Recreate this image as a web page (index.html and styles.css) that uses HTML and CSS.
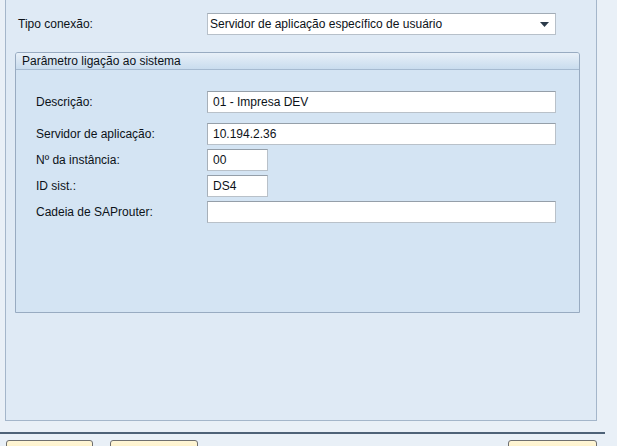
FILE: index.html
```html
<!DOCTYPE html>
<html lang="pt">
<head>
<meta charset="utf-8">
<title>Parâmetro ligação ao sistema</title>
<link rel="stylesheet" href="styles.css">
</head>
<body>
<div class="window">
  <div class="conn-row">
    <span class="label conn-label">Tipo conexão:</span>
    <div class="select">
      <span class="select-text">Servidor de aplicação específico de usuário</span>
      <svg class="arrow" width="9" height="5" viewBox="0 0 9 5"><path d="M0 0h9L4.5 5z" fill="#2b3a4a"/></svg>
    </div>
  </div>
  <div class="group">
    <div class="group-header">Parâmetro ligação ao sistema</div>
    <div class="fields">
      <div class="field first">
        <span class="label field-label">Descrição:</span>
        <div class="input wide">01 - Impresa DEV</div>
      </div>
      <div class="field">
        <span class="label field-label">Servidor de aplicação:</span>
        <div class="input wide">10.194.2.36</div>
      </div>
      <div class="field">
        <span class="label field-label">Nº da instância:</span>
        <div class="input short">00</div>
      </div>
      <div class="field">
        <span class="label field-label">ID sist.:</span>
        <div class="input short">DS4</div>
      </div>
      <div class="field">
        <span class="label field-label">Cadeia de SAProuter:</span>
        <div class="input wide"></div>
      </div>
    </div>
  </div>
</div>
<div class="separator"></div>
<div class="buttons">
  <div class="btn b1"></div>
  <div class="btn b2"></div>
  <div class="btn b3"></div>
</div>
</body>
</html>
```
FILE: styles.css
```css
html, body {
  margin: 0;
  padding: 0;
}
body {
  width: 617px;
  height: 446px;
  overflow: hidden;
  background: #e9f0f7;
  font-family: "Liberation Sans", Arial, sans-serif;
  font-size: 12px;
  color: #0c1218;
}
.window {
  margin-left: 5px;
  width: 590px;
  height: 420px;
  border: 1px solid #a4b6ca;
  border-top: none;
  background: #dfeaf5;
}
.conn-row {
  display: flex;
  align-items: center;
  padding-top: 13px;
  padding-left: 12px;
}
.conn-label {
  width: 189px;
}
.label {
  line-height: 22px;
  white-space: nowrap;
}
.select {
  box-sizing: border-box;
  width: 349px;
  height: 22px;
  background: #fff;
  border: 1px solid #b7c0c9;
  border-top-color: #a2acb6;
  display: flex;
  align-items: center;
  padding-left: 2px;
  padding-right: 6px;
}
.select-text {
  flex: 1;
  white-space: nowrap;
}
.arrow {
  display: block;
}
.group {
  box-sizing: border-box;
  margin-top: 17px;
  margin-left: 9px;
  width: 565px;
  height: 261px;
  border: 1px solid #98abc1;
  border-radius: 3px 3px 0 0;
  background: #d4e4f3;
}
.group-header {
  height: 16px;
  line-height: 16px;
  padding-left: 6px;
  border-bottom: 1px solid #a6bad0;
  background: linear-gradient(#e8f0f8, #c9dcee);
  border-radius: 2px 2px 0 0;
  white-space: nowrap;
}
.fields {
  display: flex;
  flex-direction: column;
  gap: 4px;
  padding-top: 21px;
  padding-left: 20px;
}
.field {
  display: flex;
  align-items: center;
  height: 22px;
}
.field.first {
  margin-bottom: 6px;
}
.field-label {
  width: 171px;
}
.input {
  box-sizing: border-box;
  height: 22px;
  line-height: 20px;
  background: #fff;
  border: 1px solid #b9c1c9;
  border-top-color: #959fa9;
  border-left-color: #a7b0b9;
  padding-left: 5px;
  white-space: nowrap;
}
.input.wide {
  width: 349px;
}
.input.short {
  width: 61px;
}
.separator {
  margin-top: 11px;
  width: 605px;
  height: 2px;
  background: #4e6277;
}
.buttons {
  display: flex;
  margin-top: 6px;
  padding-left: 6px;
  width: 591px;
}
.btn {
  box-sizing: border-box;
  height: 24px;
  border: 1px solid #6f6f6f;
  border-radius: 3px;
  background: linear-gradient(#fff6d6, #fbe9b0);
}
.b1 {
  width: 87px;
}
.b2 {
  width: 88px;
  margin-left: 17px;
}
.b3 {
  width: 89px;
  margin-left: auto;
}
```
